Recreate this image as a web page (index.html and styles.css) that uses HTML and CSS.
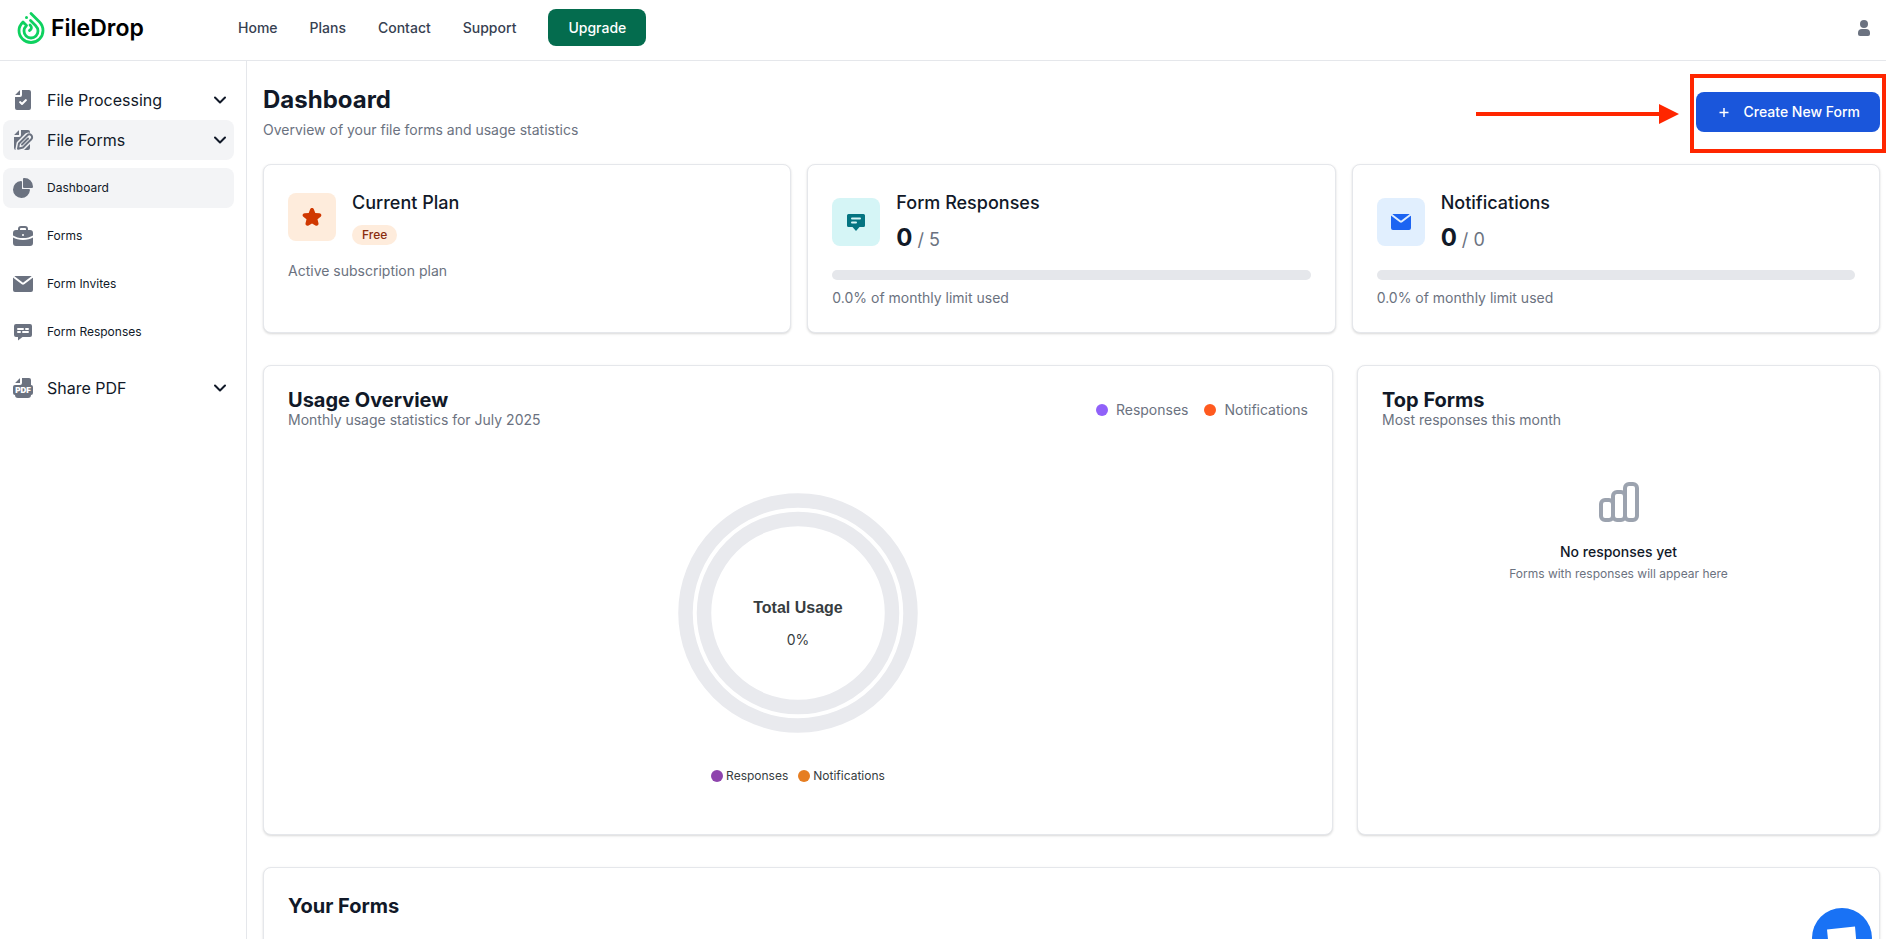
FILE: index.html
```html
<!DOCTYPE html>
<html lang="en">

<head>
    <meta charset="UTF-8">
    <meta name="viewport" content="width=device-width, initial-scale=1.0">
    <title>FileDrop - Dashboard</title>
    <link rel="stylesheet" href="styles.css">
</head>

<body>
    <!-- Shared icons -->
    <svg class="sprite" aria-hidden="true">
        <symbol id="chevron" viewBox="0 0 12 12">
            <path d="M1 3.5 6 8.5l5-5" fill="none" stroke="currentColor" stroke-width="2" stroke-linecap="round" stroke-linejoin="round" />
        </symbol>
        <symbol id="envelope" viewBox="0 0 24 24">
            <path d="M2.04 5.61A2 2 0 0 0 2 6v12a2 2 0 0 0 2 2h16a2 2 0 0 0 2-2V6c0-.12-.01-.24-.03-.35l-.87.65-7.89 6.03a2 2 0 0 1-2.43 0L2.88 6.29l-.84-.68Z" />
            <path d="M20.68 4.12A2 2 0 0 0 20 4H4c-.22 0-.44.04-.64.1l.76.61L12 10.74 19.9 4.7l.78-.58Z" />
        </symbol>
    </svg>

    <header class="topbar">
        <a class="logo" href="#">
            <svg width="28" height="34" viewBox="0 0 28 34" fill="none" stroke="#0ed15f" stroke-width="2.8" stroke-linecap="round" stroke-linejoin="round">
                <path d="M14 2.5 22.5 11C25.2 13.7 26 16.5 26 19.5A12 12 0 0 1 2 19.5C2 16.5 3.5 13.5 6 11L9.5 14.5C7.5 16.5 7 18 7 20a7 7 0 0 0 14 0c0-2-1-4-2.5-5.5L13.5 9.5" />
                <path d="M13 14c2 2 2 4-.5 5.5" />
                <circle cx="9.5" cy="6.5" r="1.5" fill="#0ed15f" stroke="none" />
            </svg>
            <span>FileDrop</span>
        </a>
        <nav class="nav">
            <a href="#">Home</a>
            <a href="#">Plans</a>
            <a href="#">Contact</a>
            <a href="#">Support</a>
            <button class="upgrade" type="button">Upgrade</button>
        </nav>
        <button class="user" type="button" aria-label="Account">
            <svg width="24" height="24" viewBox="0 0 24 24">
                <circle cx="12" cy="8" r="4" />
                <path d="M10 13h4a4 4 0 0 1 4 4v1a2 2 0 0 1-2 2H8a2 2 0 0 1-2-2v-1a4 4 0 0 1 4-4Z" />
            </svg>
        </button>
    </header>

    <div class="layout">
        <aside class="sidebar">
            <button class="group" type="button">
                <svg class="icon" viewBox="0 0 24 24">
                    <path d="M9 2.22V7H4.22c.1-.18.22-.35.36-.5L8.5 2.59c.15-.15.32-.27.5-.37Z" />
                    <path fill-rule="evenodd" d="M11 2v5a2 2 0 0 1-2 2H4v11a2 2 0 0 0 2 2h12a2 2 0 0 0 2-2V4a2 2 0 0 0-2-2h-7Zm4.7 10.7a1 1 0 0 0-1.4-1.4L11 14.6l-1.3-1.3a1 1 0 0 0-1.4 1.4l2 2a1 1 0 0 0 1.4 0l4-4Z" />
                </svg>
                <span>File Processing</span>
                <svg class="chevron"><use href="#chevron" /></svg>
            </button>
            <button class="group active" type="button">
                <svg class="icon" viewBox="0 0 24 24">
                    <path d="M8 2.22V7H3.22c.1-.18.22-.35.36-.5L7.5 2.59c.15-.15.32-.27.5-.37Z" />
                    <path d="M10 2v5a2 2 0 0 1-2 2H3v11a2 2 0 0 0 2 2h12a2 2 0 0 0 2-2V4a2 2 0 0 0-2-2h-7Z" />
                    <path d="M8 15.5 16 7.5a3 3 0 0 1 4 4L12 19.5l-5 1.5Z" stroke="#f3f4f6" stroke-width="5" stroke-linejoin="round" />
                    <path d="M8 15.5 16.3 7.2a2.7 2.7 0 0 1 4 4L12 19.5l-5 1.3Z" fill="#f3f4f6" stroke="#6b7280" stroke-width="2" stroke-linejoin="round" />
                    <path d="m11 16.5 6-6" fill="none" stroke="#6b7280" stroke-width="2" stroke-linecap="round" />
                </svg>
                <span>File Forms</span>
                <svg class="chevron"><use href="#chevron" /></svg>
            </button>
            <ul class="submenu">
                <li><a class="active" href="#">
                    <svg class="icon" viewBox="0 0 24 24">
                        <path d="M13.5 2c-.18 0-.36.01-.49.02l-.08.01a1 1 0 0 0-.93 1V11a1 1 0 0 0 1 1h7.98a1 1 0 0 0 1-.93V11c.01-.14.02-.32.02-.5A8.5 8.5 0 0 0 13.5 2Z" />
                        <path d="M11 6.03a1 1 0 0 0-1.07-1 8.5 8.5 0 1 0 9.04 9.04 1 1 0 0 0-1-1.07H11V6.03Z" />
                    </svg>
                    <span>Dashboard</span></a></li>
                <li><a href="#">
                    <svg class="icon" viewBox="0 0 24 24">
                        <path fill-rule="evenodd" d="M10 2a3 3 0 0 0-3 3v1H5a3 3 0 0 0-3 3v2.4c2.5 1.6 6 2.6 10 2.6s7.5-1 10-2.6V9a3 3 0 0 0-3-3h-2V5a3 3 0 0 0-3-3h-4Zm5 4V5a1 1 0 0 0-1-1h-4a1 1 0 0 0-1 1v1h6Zm-3 4a1 1 0 1 0 0 2 1 1 0 0 0 0-2Z" />
                        <path d="M2 13.6V19a3 3 0 0 0 3 3h14a3 3 0 0 0 3-3v-5.4C19.5 15.1 16 16 12 16s-7.5-.9-10-2.4Z" />
                    </svg>
                    <span>Forms</span></a></li>
                <li><a href="#">
                    <svg class="icon"><use href="#envelope" /></svg>
                    <span>Form Invites</span></a></li>
                <li><a href="#">
                    <svg class="icon" viewBox="0 0 24 24">
                        <path d="M5 4a2 2 0 0 0-2 2v9a2 2 0 0 0 2 2h2v3.5l4.5-3.5H19a2 2 0 0 0 2-2V6a2 2 0 0 0-2-2H5Z" />
                        <path d="M7 9h5m3 0h2M7 12h2m3 0h5" fill="none" stroke="#fff" stroke-width="2" stroke-linecap="round" />
                    </svg>
                    <span>Form Responses</span></a></li>
            </ul>
            <button class="group" type="button">
                <svg class="icon" viewBox="0 0 24 24">
                    <path d="M9 2.22V7H4.22c.1-.18.22-.35.36-.5L8.5 2.59c.15-.15.32-.27.5-.37Z" />
                    <path d="M11 2v5a2 2 0 0 1-2 2H4a2 2 0 0 0-2 2v6a2 2 0 0 0 2 2 3 3 0 0 0 3 3h10a3 3 0 0 0 3-3 2 2 0 0 0 2-2v-6a2 2 0 0 0-2-2V4a2 2 0 0 0-2-2h-7Z" />
                    <text class="pdf" x="12" y="17" text-anchor="middle">PDF</text>
                </svg>
                <span>Share PDF</span>
                <svg class="chevron"><use href="#chevron" /></svg>
            </button>
        </aside>

        <main class="main">
            <div class="page-head">
                <div>
                    <h1>Dashboard</h1>
                    <p>Overview of your file forms and usage statistics</p>
                </div>
                <div class="create-wrap">
                    <button class="create" type="button">
                        <svg width="16" height="16" viewBox="0 0 16 16" fill="none" stroke="currentColor" stroke-width="1.5">
                            <path d="M8 4v9M3.5 8.5h9" />
                        </svg>
                        Create New Form
                    </button>
                    <!-- Highlight over the button -->
                    <div class="highlight"></div>
                    <svg class="arrow" width="203" height="20" viewBox="0 0 203 20">
                        <path d="M0 8h183V0l20 10-20 10v-8H0Z" />
                    </svg>
                </div>
            </div>

            <section class="stats">
                <div class="card">
                    <div class="stat-head">
                        <div class="tile orange">
                            <svg width="24" height="24" viewBox="0 0 24 24">
                                <path d="M13.85 4.24c-.63-1.65-3.07-1.65-3.7 0l-1.44 3.75-4.17.25c-1.85.11-2.6 2.4-1.18 3.55l3.15 2.56-1 3.95c-.45 1.77 1.48 3.2 3.05 2.23L12 18.4l3.44 2.13c1.57.97 3.5-.46 3.05-2.23l-1-3.95 3.15-2.56c1.42-1.15.67-3.44-1.18-3.55l-4.17-.25-1.44-3.75Z" />
                            </svg>
                        </div>
                        <div>
                            <h3>Current Plan</h3>
                            <span class="badge">Free</span>
                        </div>
                    </div>
                    <p>Active subscription plan</p>
                </div>
                <div class="card">
                    <div class="stat-head">
                        <div class="tile teal">
                            <svg width="24" height="24" viewBox="0 0 24 24">
                                <path fill-rule="evenodd" d="M3 5.5A1.5 1.5 0 0 1 4.5 4h15A1.5 1.5 0 0 1 21 5.5v10a1.5 1.5 0 0 1-1.5 1.5h-4L12 21l-3.5-4h-4A1.5 1.5 0 0 1 3 15.5v-10ZM8 7.5a1 1 0 0 0 0 2h8a1 1 0 0 0 0-2H8Zm0 4a1 1 0 0 0 0 2h4a1 1 0 0 0 0-2H8Z" />
                            </svg>
                        </div>
                        <div>
                            <h3>Form Responses</h3>
                            <div class="count"><b>0</b> / 5</div>
                        </div>
                    </div>
                    <div class="bar"></div>
                    <p>0.0% of monthly limit used</p>
                </div>
                <div class="card">
                    <div class="stat-head">
                        <div class="tile blue">
                            <svg width="24" height="24"><use href="#envelope" /></svg>
                        </div>
                        <div>
                            <h3>Notifications</h3>
                            <div class="count"><b>0</b> / 0</div>
                        </div>
                    </div>
                    <div class="bar"></div>
                    <p>0.0% of monthly limit used</p>
                </div>
            </section>

            <section class="overview">
                <div class="card usage">
                    <div class="usage-head">
                        <div>
                            <h2>Usage Overview</h2>
                            <p>Monthly usage statistics for July 2025</p>
                        </div>
                        <div class="legend">
                            <span><i class="dot violet"></i>Responses</span>
                            <span><i class="dot red"></i>Notifications</span>
                        </div>
                    </div>
                    <div class="chart">
                        <svg width="240" height="240" viewBox="0 0 240 240">
                            <g fill="none" stroke="#e9eaee" stroke-width="14.5">
                                <circle cx="120" cy="120" r="112.5" />
                                <circle cx="120" cy="120" r="94" />
                            </g>
                            <text class="chart-title" x="120" y="120" text-anchor="middle">Total Usage</text>
                            <text class="chart-value" x="120" y="152" text-anchor="middle">0%</text>
                        </svg>
                        <div class="chart-legend">
                            <span><i class="dot purple"></i>Responses</span>
                            <span><i class="dot amber"></i>Notifications</span>
                        </div>
                    </div>
                </div>
                <div class="card">
                    <h2>Top Forms</h2>
                    <p>Most responses this month</p>
                    <div class="empty">
                        <svg width="48" height="48" viewBox="0 0 24 24" fill="none" stroke="#9ca3af" stroke-width="2">
                            <rect x="3" y="11" width="6" height="10" rx="2" />
                            <rect x="9" y="7" width="6" height="14" rx="2" />
                            <rect x="15" y="3" width="6" height="18" rx="2" />
                        </svg>
                        <strong>No responses yet</strong>
                        <small>Forms with responses will appear here</small>
                    </div>
                </div>
            </section>

            <section class="card forms">
                <h2>Your Forms</h2>
            </section>
        </main>
    </div>

    <button class="chat" type="button" aria-label="Open chat">
        <svg width="60" height="60" viewBox="0 0 60 60">
            <path d="m15 21.5 28-3 2 23-7-2-21 2Z" />
        </svg>
    </button>
</body>

</html>
```
FILE: styles.css
```css
* {
    margin: 0;
    padding: 0;
    box-sizing: border-box;
}

body {
    height: 100vh;
    display: flex;
    flex-direction: column;
    overflow: hidden;
    font-family: Inter, sans-serif;
    font-size: 14px;
    line-height: 20px;
    color: #6b7280;
    background: #fff;
}

a {
    color: inherit;
    text-decoration: none;
}

button {
    border: none;
    background: transparent;
    font: inherit;
    color: inherit;
    cursor: pointer;
}

svg {
    display: block;
    flex-shrink: 0;
    fill: currentColor;
}

svg[fill="none"] {
    fill: none;
}

.sprite {
    position: absolute;
    width: 0;
    height: 0;
}

/* Top bar */
.topbar {
    display: flex;
    align-items: center;
    flex-shrink: 0;
    padding: 9px 10px 14px 17px;
    border-bottom: 1px solid #e5e7eb;
}

.logo {
    display: flex;
    align-items: center;
    gap: 6px;
    width: 221px;
    font-size: 23px;
    font-weight: 600;
    color: #000;
}

.nav {
    display: flex;
    align-items: center;
    gap: 32px;
    font-weight: 500;
    color: #374151;
}

.upgrade {
    height: 37px;
    padding: 0 20px;
    border-radius: 8px;
    background: #046c4e;
    color: #fff;
}

.user {
    margin-left: auto;
}

.layout {
    display: flex;
    flex: 1;
    min-height: 0;
}

/* Sidebar */
.sidebar {
    width: 247px;
    flex-shrink: 0;
    padding: 19px 12px 0 3px;
    border-right: 1px solid #e5e7eb;
    color: #111928;
}

.group,
.submenu a {
    display: flex;
    align-items: center;
    gap: 12px;
    width: 100%;
    height: 40px;
    padding: 0 8px;
    border-radius: 8px;
}

.group {
    font-size: 16px;
    text-align: left;
}

.group span {
    flex: 1;
}

.icon {
    width: 24px;
    height: 24px;
    color: #6b7280;
}

.pdf {
    font-size: 8px;
    font-weight: 900;
    fill: #fff;
}

.chevron {
    width: 12px;
    height: 12px;
}

.submenu {
    display: flex;
    flex-direction: column;
    gap: 8px;
    padding: 8px 0 16px;
    list-style: none;
    font-size: 12px;
}

.active {
    background: #f3f4f6;
}

/* Main */
.main {
    flex: 1;
    overflow-y: auto;
    scrollbar-width: none;
    padding: 23px 6px 24px 16px;
}

.page-head {
    display: flex;
    align-items: center;
    justify-content: space-between;
    margin-bottom: 24px;
}

h1 {
    margin-bottom: 4px;
    font-size: 24px;
    line-height: 32px;
    font-weight: 700;
    color: #111928;
}

h2 {
    font-size: 20px;
    line-height: 20px;
    font-weight: 700;
    color: #111928;
}

h3 {
    font-size: 18px;
    line-height: 28px;
    font-weight: 500;
    color: #111928;
}

.create-wrap {
    position: relative;
}

.create {
    display: flex;
    align-items: center;
    gap: 12px;
    height: 40px;
    padding: 0 20px;
    border-radius: 8px;
    background: #1a56db;
    font-weight: 500;
    color: #fff;
}

.highlight {
    position: absolute;
    top: -18px;
    right: -6px;
    bottom: -21px;
    left: -6px;
    border: 4px solid #ff2600;
    pointer-events: none;
}

.arrow {
    position: absolute;
    top: 12px;
    right: 201px;
    color: #ff2600;
}

.card {
    padding: 24px;
    border: 1px solid #e5e7eb;
    border-radius: 8px;
    background: #fff;
    box-shadow: 0 1px 3px rgba(0, 0, 0, 0.1), 0 1px 2px rgba(0, 0, 0, 0.06);
}

.stats {
    display: grid;
    grid-template-columns: repeat(3, 1fr);
    gap: 16px;
    margin-bottom: 32px;
}

.stat-head {
    display: flex;
    align-items: center;
    gap: 16px;
    margin-bottom: 16px;
}

.tile {
    display: flex;
    padding: 12px;
    border-radius: 8px;
}

.orange {
    background: #feecdc;
    color: #d03801;
}

.teal {
    background: #d5f5f6;
    color: #047481;
}

.blue {
    background: #e1effe;
    color: #1c64f2;
}

.badge {
    display: block;
    width: fit-content;
    margin-top: 8px;
    padding: 0 10px;
    border-radius: 10px;
    background: #feecdc;
    font-size: 12px;
    font-weight: 500;
    color: #8a2c0d;
}

.count {
    display: flex;
    align-items: baseline;
    gap: 5px;
    margin-top: 5px;
    font-size: 18px;
    line-height: 28px;
}

.count b {
    font-size: 24px;
    line-height: 32px;
    color: #111928;
}

.bar {
    height: 10px;
    margin-bottom: 8px;
    border-radius: 5px;
    background: #e5e7eb;
}

.overview {
    display: grid;
    grid-template-columns: repeat(3, 1fr);
    gap: 24px;
    margin-bottom: 32px;
}

.usage {
    grid-column: span 2;
    min-height: 470px;
}

.usage-head {
    display: flex;
    align-items: center;
    justify-content: space-between;
}

.legend {
    display: flex;
    gap: 16px;
}

.legend span,
.chart-legend span {
    display: flex;
    align-items: center;
    gap: 8px;
}

.dot {
    width: 12px;
    height: 12px;
    border-radius: 50%;
}

.violet {
    background: #9061f9;
}

.red {
    background: #ff5a1f;
}

.purple {
    background: #8e44ad;
}

.amber {
    background: #e67e22;
}

.chart {
    display: flex;
    flex-direction: column;
    align-items: center;
    gap: 33px;
    padding-top: 63px;
}

.chart-title {
    font-family: "Liberation Sans", Arial, sans-serif;
    font-size: 16px;
    font-weight: 700;
    fill: #373d3f;
}

.chart-value {
    font-size: 14px;
    fill: #373d3f;
}

.chart-legend {
    display: flex;
    gap: 10px;
    font-size: 12px;
    color: #373d3f;
}

.chart-legend span {
    gap: 3px;
}

.empty {
    display: flex;
    flex-direction: column;
    align-items: center;
    padding-top: 48px;
}

.empty strong {
    margin: 16px 0 2px;
    font-weight: 500;
    color: #111928;
}

.empty small {
    font-size: 12px;
}

.forms {
    min-height: 200px;
}

.forms h2 {
    line-height: 28px;
}

.chat {
    position: fixed;
    right: 14px;
    bottom: -29px;
    border-radius: 50%;
    background: #1972f5;
    color: #fff;
}
```
